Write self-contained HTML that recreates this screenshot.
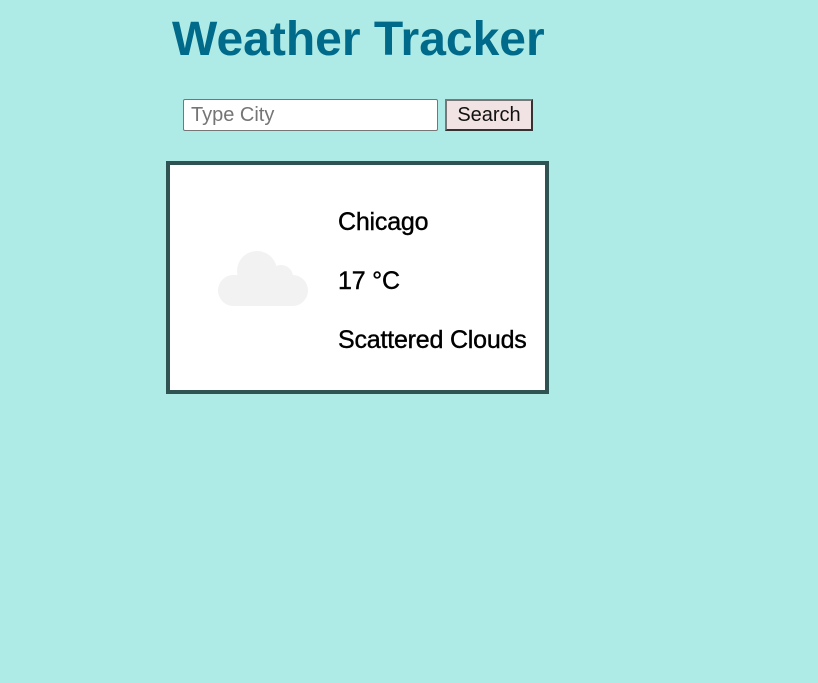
<!DOCTYPE html>
<html><head><style>
body{margin:0;background:#aeebe6;width:818px;height:683px;position:relative;font-family:"Liberation Sans",sans-serif;overflow:hidden}
h1{position:absolute;left:172px;top:10px;margin:0;font-size:48px;font-weight:bold;color:#006a8a;white-space:nowrap;line-height:60px}
.in{position:absolute;left:183px;top:99px;border:1px solid #767676;background:#fff;border-radius:2px;box-sizing:border-box;width:255px;height:32px;font-size:20px;color:#757575;padding-left:7px;line-height:31px}
.btn{position:absolute;left:445px;top:99px;width:88px;height:32px;box-sizing:border-box;border:2px solid #333;border-top-color:#777;border-left-color:#777;background:#f1e3e3;font-size:20px;text-align:center;line-height:29px;color:#111}
.card{position:absolute;left:166px;top:161px;width:383px;height:233px;box-sizing:border-box;border:4px solid #2e5352;background:#fff}
.t{position:absolute;left:338px;font-size:25px;color:#000;white-space:nowrap;-webkit-text-stroke:0.4px #000;letter-spacing:-0.2px}
</style></head><body>
<h1>Weather Tracker</h1>
<div class="in">Type City</div>
<div class="btn">Search</div>
<div class="card"></div>
<svg style="position:absolute;left:0;top:0" width="400" height="400">
<g fill="#f2f2f2"><circle cx="257" cy="271" r="20"/><circle cx="281" cy="277" r="12"/><rect x="218" y="275" width="90" height="31" rx="15.5"/></g></svg>
<div class="t" style="top:208px">Chicago</div>
<div class="t" style="top:267px">17 °C</div>
<div class="t" style="top:326px">Scattered Clouds</div>
</body></html>
